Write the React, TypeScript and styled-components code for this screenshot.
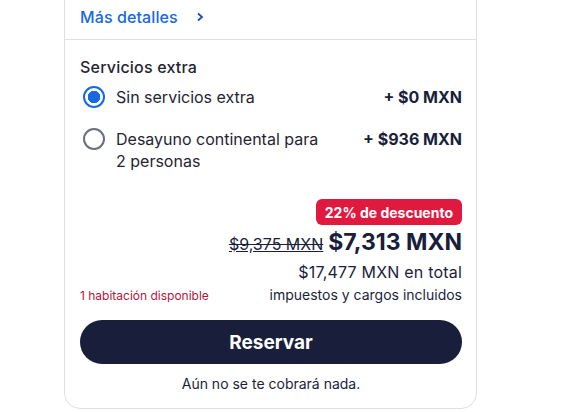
import styled, { createGlobalStyle } from "styled-components";

const GlobalStyle = createGlobalStyle`
    html, body {
        margin: 0;
        padding: 0;
        background: #ffffff;
        font-family: Inter, "Liberation Sans", sans-serif;
        color: #191e3b;
        overflow: hidden;
    }
`;

const Page = styled.div`
    width: 567px;
    height: 412px;
    padding-left: 64px;
    box-sizing: border-box;
    display: flex;
    align-items: flex-start;
    overflow: hidden;
`;

const Card = styled.div`
    width: 413px;
    margin-top: -20px;
    box-sizing: border-box;
    border: 1px solid #dfe0e4;
    border-radius: 16px;
    background: #ffffff;
`;

const MoreRow = styled.div`
    height: 59px;
    box-sizing: border-box;
    display: flex;
    align-items: flex-end;
    gap: 17px;
    padding: 0 15px 10px 15px;
    border-bottom: 1px solid #dfe0e4;
`;

const MoreLink = styled.a`
    font-size: 16px;
    line-height: 24px;
    color: #1668e3;
    font-weight: 500;
    text-decoration: none;
    letter-spacing: 0.1px;
`;

const Chevron = styled.svg`
    width: 10px;
    height: 24px;
`;

const Body = styled.div`
    padding: 15px 14px 14px 15px;
`;

const Heading = styled.div`
    font-size: 16px;
    line-height: 24px;
    font-weight: 500;
    color: #1f2533;
    letter-spacing: 0.2px;
`;

const Options = styled.div`
    display: flex;
    flex-direction: column;
    gap: 20px;
    margin-top: 7px;
`;

const OptionRow = styled.label`
    display: flex;
    align-items: flex-start;
    font-size: 16px;
    line-height: 22px;
    color: #1f2533;
`;

const Radio = styled.span<{ $checked?: boolean }>`
    flex: 0 0 28px;
    height: 22px;
    margin-right: 8px;
    display: flex;
    align-items: center;
    justify-content: center;
    &::before {
        content: "";
        width: 22px;
        height: 22px;
        box-sizing: border-box;
        border-radius: 50%;
        border: 2px solid ${(p) => (p.$checked ? "#1668e3" : "#6b6e7d")};
        background: ${(p) =>
            p.$checked
                ? "radial-gradient(circle, #1668e3 0 6px, #ffffff 6.5px)"
                : "#ffffff"};
    }
`;

const OptionText = styled.span`
    flex: 0 1 212px;
    max-width: 212px;
`;

const OptionPrice = styled.span`
    margin-left: auto;
    font-weight: 700;
    white-space: nowrap;
    color: #191e3b;
`;

const PriceBlock = styled.div`
    display: flex;
    flex-direction: column;
    align-items: flex-end;
    margin-top: 27px;
`;

const Badge = styled.span`
    height: 26px;
    padding: 0 9px;
    display: flex;
    align-items: center;
    border-radius: 6px;
    background: #e0193f;
    color: #ffffff;
    font-size: 14px;
    font-weight: 700;
`;

const PriceLine = styled.div`
    margin-top: 3px;
    display: flex;
    align-items: baseline;
    gap: 5px;
    line-height: 28px;
`;

const OldPrice = styled.span`
    font-size: 16px;
    color: #191e3b;
    text-decoration: line-through underline;
`;

const NewPrice = styled.span`
    font-size: 23px;
    font-weight: 700;
    color: #191e3b;
`;

const Total = styled.div`
    margin-top: 3px;
    font-size: 16px;
    line-height: 22px;
    color: #191e3b;
    letter-spacing: 0.2px;
`;

const InfoRow = styled.div`
    margin-top: 2px;
    display: flex;
    justify-content: space-between;
    align-items: flex-end;
`;

const Availability = styled.span`
    font-size: 12px;
    line-height: 18px;
    color: #b3163b;
`;

const Taxes = styled.span`
    font-size: 14px;
    line-height: 20px;
    color: #191e3b;
`;

const ReserveButton = styled.button`
    display: block;
    width: 100%;
    height: 44px;
    margin-top: 15px;
    border: none;
    border-radius: 22px;
    background: #191e3b;
    color: #ffffff;
    font-family: inherit;
    font-size: 19px;
    font-weight: 700;
    cursor: pointer;
`;

const Note = styled.div`
    margin-top: 10px;
    text-align: center;
    font-size: 14px;
    line-height: 20px;
    color: #191e3b;
`;

const extras = [
    { id: "none", label: "Sin servicios extra", price: "+ $0 MXN", checked: true },
    {
        id: "breakfast",
        label: "Desayuno continental para 2 personas",
        price: "+ $936 MXN",
        checked: false,
    },
];

export default function App() {
    return (
        <Page>
            <GlobalStyle />
            <Card>
                <MoreRow>
                    <MoreLink href="#">Más detalles</MoreLink>
                    <Chevron viewBox="0 0 10 24">
                        <path
                            d="M3 8.5 L7 12 L3 15.5"
                            fill="none"
                            stroke="#1c4fa8"
                            strokeWidth="1.8"
                        />
                    </Chevron>
                </MoreRow>
                <Body>
                    <Heading>Servicios extra</Heading>
                    <Options>
                        {extras.map((extra) => (
                            <OptionRow key={extra.id}>
                                <Radio $checked={extra.checked} />
                                <OptionText>{extra.label}</OptionText>
                                <OptionPrice>{extra.price}</OptionPrice>
                            </OptionRow>
                        ))}
                    </Options>
                    <PriceBlock>
                        <Badge>22% de descuento</Badge>
                        <PriceLine>
                            <OldPrice>$9,375 MXN</OldPrice>
                            <NewPrice>$7,313 MXN</NewPrice>
                        </PriceLine>
                        <Total>$17,477 MXN en total</Total>
                    </PriceBlock>
                    <InfoRow>
                        <Availability>1 habitación disponible</Availability>
                        <Taxes>impuestos y cargos incluidos</Taxes>
                    </InfoRow>
                    <ReserveButton>Reservar</ReserveButton>
                    <Note>Aún no se te cobrará nada.</Note>
                </Body>
            </Card>
        </Page>
    );
}
